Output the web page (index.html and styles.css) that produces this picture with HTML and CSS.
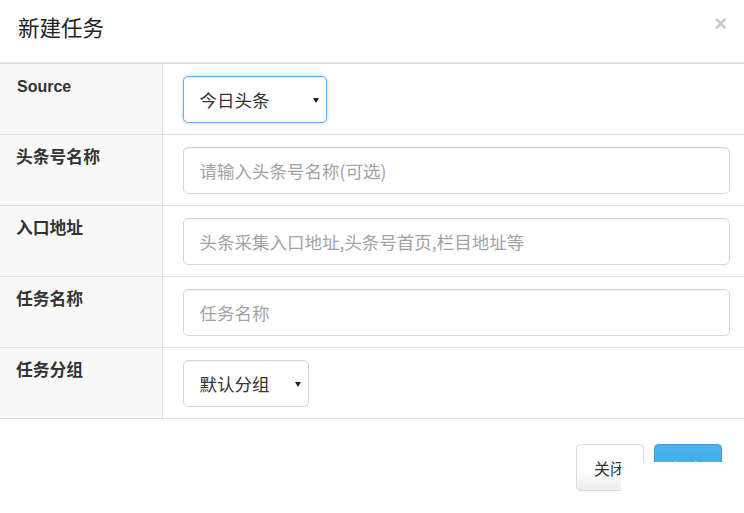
FILE: index.html
```html
<!DOCTYPE html>
<html lang="zh-CN">
<head>
<meta charset="utf-8">
<title>新建任务</title>
<link rel="stylesheet" href="styles.css">
</head>
<body>
<div class="modal">
  <div class="modal-header">
    <h4 class="modal-title">新建任务</h4>
    <button class="close" type="button">×</button>
  </div>
  <table class="form-table">
    <tr>
      <th>Source</th>
      <td>
        <span class="select-wrap select-source focused">
          <select class="select"><option>今日头条</option></select>
        </span>
      </td>
    </tr>
    <tr>
      <th class="zh">头条号名称</th>
      <td><input class="input" type="text" placeholder="请输入头条号名称(可选)"></td>
    </tr>
    <tr>
      <th class="zh">入口地址</th>
      <td><input class="input" type="text" placeholder="头条采集入口地址,头条号首页,栏目地址等"></td>
    </tr>
    <tr>
      <th class="zh">任务名称</th>
      <td><input class="input" type="text" placeholder="任务名称"></td>
    </tr>
    <tr>
      <th class="zh">任务分组</th>
      <td>
        <span class="select-wrap select-group">
          <select class="select"><option>默认分组</option></select>
        </span>
      </td>
    </tr>
  </table>
  <div class="modal-footer">
    <button class="btn btn-default" type="button">关闭</button>
    <button class="btn btn-primary" type="button">提交</button>
  </div>
  <div class="paint-mask"></div>
</div>
</body>
</html>
```
FILE: styles.css
```css
html, body {
  margin: 0;
  padding: 0;
  background: #fff;
}
body {
  font-family: "Liberation Sans", "Noto Sans CJK SC", sans-serif;
  color: #333;
}
.modal {
  position: relative;
  width: 744px;
  height: 513px;
  overflow: hidden;
}
.modal-header {
  display: flex;
  justify-content: space-between;
  align-items: flex-start;
  height: 63px;
  box-sizing: border-box;
  padding: 12px 17px 0 18px;
  border-bottom: 1px solid #e5e5e5;
}
.modal-title {
  margin: 0;
  font-family: "Noto Sans CJK SC", sans-serif;
  font-weight: 400;
  font-size: 21.5px;
  line-height: 30px;
  color: #222;
}
.close {
  border: 0;
  background: none;
  padding: 0;
  margin-top: 0;
  font-family: "Liberation Sans", sans-serif;
  font-weight: 700;
  font-size: 22px;
  line-height: 24px;
  color: #c9c9c9;
}
.form-table {
  width: 100%;
  border-collapse: collapse;
  border-top: 1px solid #ddd;
}
.form-table tr {
  border-bottom: 1px solid #ddd;
}
.form-table th {
  width: 162px;
  box-sizing: border-box;
  padding: 11px 16px 0 17px;
  vertical-align: top;
  text-align: left;
  background: #f9f9f9;
  border-right: 1px solid #ddd;
  font-size: 16px;
  line-height: 23px;
  font-weight: 700;
  color: #333;
}
.form-table th.zh {
  padding-left: 16px;
  font-size: 16.8px;
}
.form-table td {
  padding: 12px 14px 11px 20px;
  vertical-align: top;
}
.input {
  display: block;
  width: 100%;
  height: 47px;
  box-sizing: border-box;
  border: 1px solid #d6d6d6;
  border-radius: 5px;
  padding: 0 16px;
  font-family: "Noto Sans CJK SC", sans-serif;
  font-size: 17.5px;
  color: #555;
  box-shadow: inset 0 1px 1px rgba(0, 0, 0, 0.06);
  outline: none;
}
.input::placeholder {
  color: #a3a3a3;
}
.select-wrap {
  position: relative;
  display: block;
  height: 47px;
}
.select-wrap::after {
  content: "";
  position: absolute;
  top: 22px;
  right: 8px;
  width: 0;
  height: 0;
  border-left: 3px solid transparent;
  border-right: 3px solid transparent;
  border-top: 5px solid #222;
  pointer-events: none;
}
.select-source {
  width: 144px;
}
.select-group {
  width: 126px;
}
.select {
  -webkit-appearance: none;
  appearance: none;
  display: block;
  width: 100%;
  height: 47px;
  box-sizing: border-box;
  border: 1px solid #d6d6d6;
  border-radius: 5px;
  padding: 0 20px 0 16px;
  background: #fff;
  font-family: "Noto Sans CJK SC", sans-serif;
  font-size: 17.5px;
  color: #333;
  box-shadow: inset 0 1px 1px rgba(0, 0, 0, 0.06);
  outline: none;
}
.focused .select {
  border-color: #66afe9;
  box-shadow: inset 0 1px 1px rgba(0, 0, 0, 0.075), 0 0 3px rgba(102, 175, 233, 0.6);
}
.modal-footer {
  display: flex;
  justify-content: flex-end;
  gap: 10px;
  padding: 25px 22px 0 0;
}
.btn {
  width: 68px;
  height: 47px;
  box-sizing: border-box;
  border-radius: 4px;
  font-family: "Noto Sans CJK SC", sans-serif;
  font-size: 16px;
  padding: 0;
}
.btn-default {
  border: 1px solid #dcdcdc;
  background: linear-gradient(#ffffff 55%, #ececec);
  color: #333;
}
.btn-primary {
  border: 1px solid #3d9fe0;
  background: linear-gradient(#4bb1ec, #3fa6e6);
  color: #fff;
}
.paint-mask {
  position: absolute;
  left: 621px;
  top: 462px;
  right: 0;
  bottom: 0;
  background: #fff;
}
```
